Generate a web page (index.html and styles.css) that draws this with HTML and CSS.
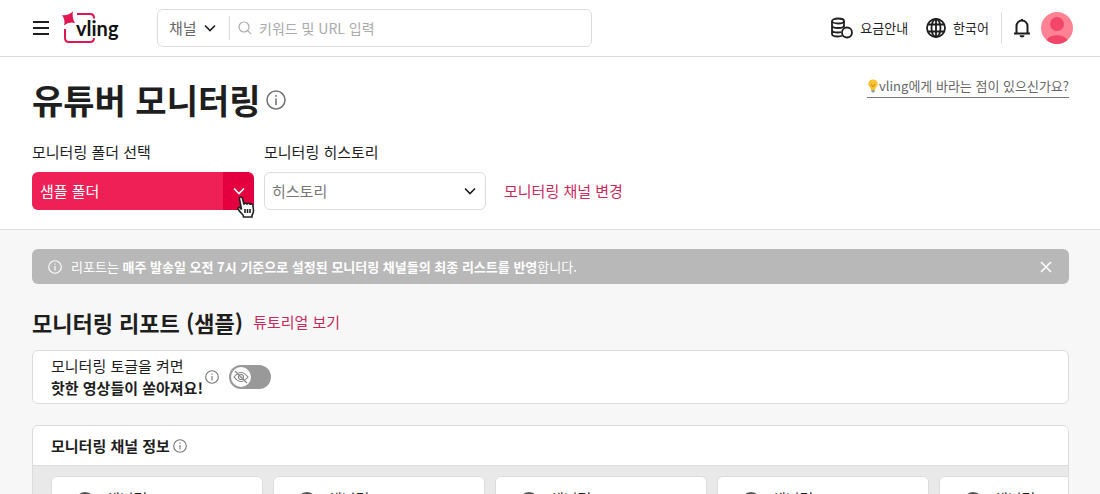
FILE: index.html
```html
<!DOCTYPE html>
<html lang="ko">
<head>
  <meta charset="UTF-8" />
  <meta name="viewport" content="width=device-width, initial-scale=1.0" />
  <title>유튜버 모니터링</title>
  <link rel="stylesheet" href="styles.css">
</head>
<body>
  <!-- Shared icons -->
  <svg class="sprite" aria-hidden="true">
    <symbol id="i-info" viewBox="0 0 20 20"><circle cx="10" cy="10" r="9"/><path d="M10 8.500v6.500M10 5v1.800"/></symbol>
    <symbol id="i-chevron" viewBox="0 0 14 14"><path d="M2 4.500l5 5 5-5"/></symbol>
  </svg>

  <header class="header">
    <button class="icon-btn menu-btn" aria-label="메뉴">
      <svg width="18" height="16" viewBox="0 0 18 16"><path d="M1 2h16M1 8h16M1 14h16"/></svg>
    </button>
    <a class="logo" href="#" aria-label="vling">
      <svg width="58" height="34" viewBox="0 0 58 34">
        <path class="logo-frame" d="M15 3h13q4 0 4 4v3M32 27q0 4-4 4H7q-4 0-4-4v-9"/>
        <path class="logo-star" d="M0 4q6 1 11-3.500-1.500 6 2 11.500-6-2-11 2.500 1.500-6-2-10.500z"/>
        <text x="14" y="25">vling</text>
      </svg>
    </a>
    <form class="search">
      <div class="search-type">
        <select aria-label="검색 유형"><option>채널</option></select>
        <svg class="chevron" width="14" height="14"><use href="#i-chevron"/></svg>
      </div>
      <svg class="search-icon" width="14" height="14" viewBox="0 0 14 14"><circle cx="6" cy="6" r="5"/><path d="M9.600 9.600l3.600 3.600"/></svg>
      <input type="text" aria-label="검색어" placeholder="키워드 및 URL 입력" />
    </form>
    <nav class="nav">
      <a href="#">
        <svg width="22" height="22" viewBox="0 0 22 22"><ellipse cx="7" cy="4" rx="6" ry="2.500"/><path d="M1 4v13c0 1.500 3 2.500 6 2.500 1.500 0 3-.2 4-.7M13 4v6M1 8.500C1 10 4 11 7 11s6-1 6-2.500M1 13c0 1.500 3 2.500 6 2.500 1 0 2-.1 3-.4"/><circle cx="16" cy="15.500" r="5"/></svg>
        요금안내
      </a>
      <a href="#">
        <svg width="20" height="20" viewBox="0 0 20 20"><circle cx="10" cy="10" r="9"/><ellipse cx="10" cy="10" rx="4.500" ry="9"/><path d="M10 1v18M2 6.500h16M2 13.500h16"/></svg>
        한국어
      </a>
    </nav>
    <div class="user">
      <button class="icon-btn" aria-label="알림">
        <svg width="18" height="20" viewBox="0 0 18 20"><path d="M1 15.500h16M3.500 15V8a5.500 5.500 0 0 1 11 0v7"/><path class="solid" d="M6.500 17.200h5a2.500 2.300 0 0 1-5 0zM8 1h2v2H8z"/></svg>
      </button>
      <button class="icon-btn" aria-label="내 계정">
        <svg class="avatar" width="32" height="32" viewBox="0 0 32 32"><circle class="face" cx="16" cy="16" r="16"/><circle cx="16" cy="12" r="7"/><path d="M5.500 28a11.500 8 0 0 1 21 0 16 16 0 0 1-21 0z"/></svg>
      </button>
    </div>
  </header>

  <section class="intro">
    <div class="intro-top">
      <h1>유튜버 모니터링</h1>
      <svg class="info" width="20" height="20"><use href="#i-info"/></svg>
      <a class="wish" href="#"><svg width="12" height="14" viewBox="0 0 12 14"><path class="bulb" d="M6 .5a4.500 4.500 0 0 0-2.700 8.200L4 11h4l.7-2.300A4.500 4.500 0 0 0 6 .5z"/><path class="bulb-core" d="M4.500 5l1 3M7.500 5l-1 3"/><path class="bulb-base" d="M4.300 11h3.400v1.500l-1 1H5.300l-1-1z"/></svg>vling에게 바라는 점이 있으신가요?</a>
    </div>
    <div class="filters">
      <div class="field">
        <label for="folder">모니터링 폴더 선택</label>
        <div class="select folder">
          <select id="folder"><option>샘플 폴더</option></select>
          <svg class="chevron" width="14" height="14"><use href="#i-chevron"/></svg>
          <svg class="pointer" width="22" height="24" viewBox="0 0 22 24"><path d="M6.500 14.500L4.500 4c-.4-2.200 2.300-2.700 2.900-.6L9 9.500c.3-1.800 2.700-1.800 3 0 .4-1.700 2.700-1.600 3 .3.500-1.500 2.700-1.200 2.900.7l.6 5c.2 2-1 3.500-1.500 5V22H8.500l-.5-2c-1.500-1.500-3.500-3.500-4.700-5.500-1.100-1.800.9-3 2.200-1.300z"/><path d="M10 14v4M12.500 14v4M15 14v4"/></svg>
        </div>
      </div>
      <div class="field">
        <label for="history">모니터링 히스토리</label>
        <div class="select">
          <select id="history"><option>히스토리</option></select>
          <svg class="chevron" width="14" height="14"><use href="#i-chevron"/></svg>
        </div>
      </div>
      <a class="link" href="#">모니터링 채널 변경</a>
    </div>
  </section>

  <main class="report">
    <div class="notice">
      <svg class="info" width="14" height="14"><use href="#i-info"/></svg>
      <p>리포트는 <strong>매주 발송일 오전 7시 기준으로 설정된 모니터링 채널들의 최종 리스트를 반영</strong>합니다.</p>
      <button class="icon-btn" aria-label="닫기"><svg width="12" height="12" viewBox="0 0 12 12"><path d="M1 1l10 10M11 1L1 11"/></svg></button>
    </div>

    <div class="report-title">
      <h2>모니터링 리포트 (샘플)</h2>
      <a class="link" href="#">튜토리얼 보기</a>
    </div>

    <div class="panel toggle-panel">
      <label for="hot">모니터링 토글을 켜면<br><strong>핫한 영상들이 쏟아져요!</strong></label>
      <svg class="info" width="14" height="14"><use href="#i-info"/></svg>
      <div class="switch">
        <input id="hot" type="checkbox" role="switch">
        <svg width="16" height="14" viewBox="0 0 16 14"><path d="M1 7q7-9 14 0-7 9-14 0zM2 1l12 12"/><circle cx="8" cy="7" r="2.500"/></svg>
      </div>
    </div>

    <section class="panel channels">
      <div class="channels-head">
        <h3>모니터링 채널 정보</h3>
        <svg class="info" width="14" height="14"><use href="#i-info"/></svg>
      </div>
      <div class="channel-list">
        <div class="channel"><span class="thumb"></span>채널명</div>
        <div class="channel"><span class="thumb"></span>채널명</div>
        <div class="channel"><span class="thumb"></span>채널명</div>
        <div class="channel"><span class="thumb"></span>채널명</div>
        <div class="channel"><span class="thumb"></span>채널명</div>
      </div>
    </section>
  </main>
</body>
</html>
```
FILE: styles.css
```css
:root {
  --primary: #ef2056;
  --primary-dark: #e4003f;
  --link: #c9285a;
  --text: #1e1e1e;
  --muted: #777;
  --line: #dcdcdc;
  --bg: #f7f7f7;
}
*, *::before, *::after { box-sizing: border-box; }
body {
  margin: 0; background: var(--bg); color: var(--text);
  font: 15px/22px "Noto Sans CJK KR", "Noto Sans", sans-serif;
  overflow-x: hidden;
}
h1, h2, h3, p { margin: 0; }
a { color: inherit; text-decoration: none; }
svg { flex: none; fill: none; stroke: currentColor; stroke-width: 2; }
select, input, button { font: inherit; color: inherit; }
select { appearance: none; background: none; border: 0; cursor: pointer; }
.sprite { display: none; }
.icon-btn { display: flex; padding: 0; border: 0; background: none; cursor: pointer; }
.info { color: var(--muted); stroke-width: 1.6; }
.link { color: var(--link); }

/* Header */
.header {
  display: flex; align-items: center; height: 57px;
  padding: 0 27px 0 32px;
  background: #fff; border-bottom: 1px solid var(--line);
}
.logo { display: flex; margin: 0 37px 0 12px; }
.logo-frame { stroke: #df1650; }
.logo-star { fill: #df1650; stroke: none; }
.logo text {
  fill: #111; stroke: #fff; stroke-width: 3; paint-order: stroke;
  font: 700 20px Lato, sans-serif;
}
.search {
  display: flex; align-items: center; flex: 0 1 435px; height: 38px;
  border: 1px solid var(--line); border-radius: 6px;
}
.search-type {
  display: grid; align-items: center; width: 72px; height: 24px;
  border-right: 1px solid var(--line);
}
.search-type > *, .select > select, .select > .chevron { grid-area: 1 / 1; }
.search-type select { width: 100%; padding: 0 11px; color: #666; }
.chevron { justify-self: end; margin-right: 12px; pointer-events: none; stroke-width: 1.6; }
.search-icon { margin: 0 7px 0 8px; color: #aaa; stroke-width: 1.2; }
.search input {
  flex: 1; min-width: 0; padding: 0; border: 0; outline: 0;
  background: none; font-size: 14px;
}
.search input::placeholder { color: #aaa; }
.nav { display: flex; gap: 18px; margin-left: auto; font-size: 13px; }
.nav a { display: flex; align-items: center; gap: 7px; }
.nav svg { stroke-width: 1.8; }
.user {
  display: flex; align-items: center; gap: 10px; height: 32px;
  margin-left: 12px; padding-left: 11px; border-left: 1px solid var(--line);
}
.solid { fill: currentColor; stroke: none; }
.avatar { fill: #f24668; stroke: none; }
.face { fill: #ff8294; }

/* Title and folder filters */
.intro {
  padding: 18px 31px 19px 32px;
  background: #fff; border-bottom: 1px solid var(--line);
}
.intro-top { display: flex; align-items: center; gap: 6px; }
h1 { font-size: 34px; line-height: 50px; font-weight: 700; }
.wish {
  display: flex; align-items: center; align-self: flex-start;
  margin-left: auto; color: #666; font-size: 13px;
  border-bottom: 1px solid #777;
}
.bulb { fill: #fbc332; stroke: none; }
.bulb-core { stroke: #d98b16; stroke-width: 1; }
.bulb-base { fill: #999; stroke: none; }
.filters { display: flex; align-items: flex-end; gap: 10px; margin-top: 16px; }
.field { flex: 0 1 222px; }
.field label { display: block; margin-bottom: 9px; }
.select {
  position: relative; display: grid; align-items: center; height: 38px;
  border: 1px solid var(--line); border-radius: 6px;
}
.select select { width: 100%; height: 100%; padding: 0 7px; color: #777; }
.select .chevron { margin-right: 8px; }
.folder {
  border: 0; color: #fff;
  background: linear-gradient(to left, var(--primary-dark) 31px, var(--primary) 31px);
}
.folder select { padding: 0 8px; color: #fff; }
.pointer {
  position: absolute; right: -3px; bottom: -9px; pointer-events: none;
  fill: #fff; stroke: #222; stroke-width: 1.6;
}
.filters .link { margin-left: 8px; line-height: 38px; }

/* Report */
.report { padding: 19px 31px 24px 32px; }
.notice {
  display: flex; align-items: center; gap: 9px; height: 35px;
  padding: 0 17px 0 16px; border-radius: 6px;
  background: #b8b8b8; color: #fff; font-size: 13px;
}
.notice .info { color: #fff; }
.notice .icon-btn { margin-left: auto; }
.notice .icon-btn svg { stroke-width: 1.6; }
.report-title { display: flex; align-items: center; gap: 10px; margin: 22px 0 12px; }
h2 { font-size: 22px; line-height: 32px; font-weight: 700; }
.panel { background: #fff; border: 1px solid var(--line); border-radius: 6px; }
.toggle-panel {
  display: flex; align-items: center; gap: 2px; min-height: 54px;
  padding: 4px 18px; margin-bottom: 21px;
}
.switch { display: grid; align-items: center; margin-left: 8px; }
.switch > * { grid-area: 1 / 1; }
.switch input {
  appearance: none; display: flex; width: 42px; height: 24px; margin: 0; padding: 2px;
  border-radius: 12px; background: #999; cursor: pointer;
}
.switch input::before { content: ""; width: 20px; height: 20px; border-radius: 50%; background: #fff; }
.switch input:checked { justify-content: flex-end; background: var(--primary); }
.switch svg { margin-left: 4px; color: #888; stroke-width: 1.2; pointer-events: none; }
.channels { overflow: hidden; }
.channels-head {
  display: flex; align-items: center; gap: 3px; height: 40px;
  padding: 0 18px; border-bottom: 1px solid var(--line);
}
h3 { font-size: 15px; font-weight: 700; }
.channel-list { display: flex; gap: 10px; padding: 10px 18px; background: #e9e9e9; overflow: hidden; }
.channel {
  display: flex; flex: 0 0 212px; gap: 11px; padding: 11px 23px;
  border: 1px solid var(--line); border-radius: 6px; background: #fff;
}
.thumb { width: 20px; height: 20px; margin-top: 4px; border-radius: 50%; background: #555; }
```
